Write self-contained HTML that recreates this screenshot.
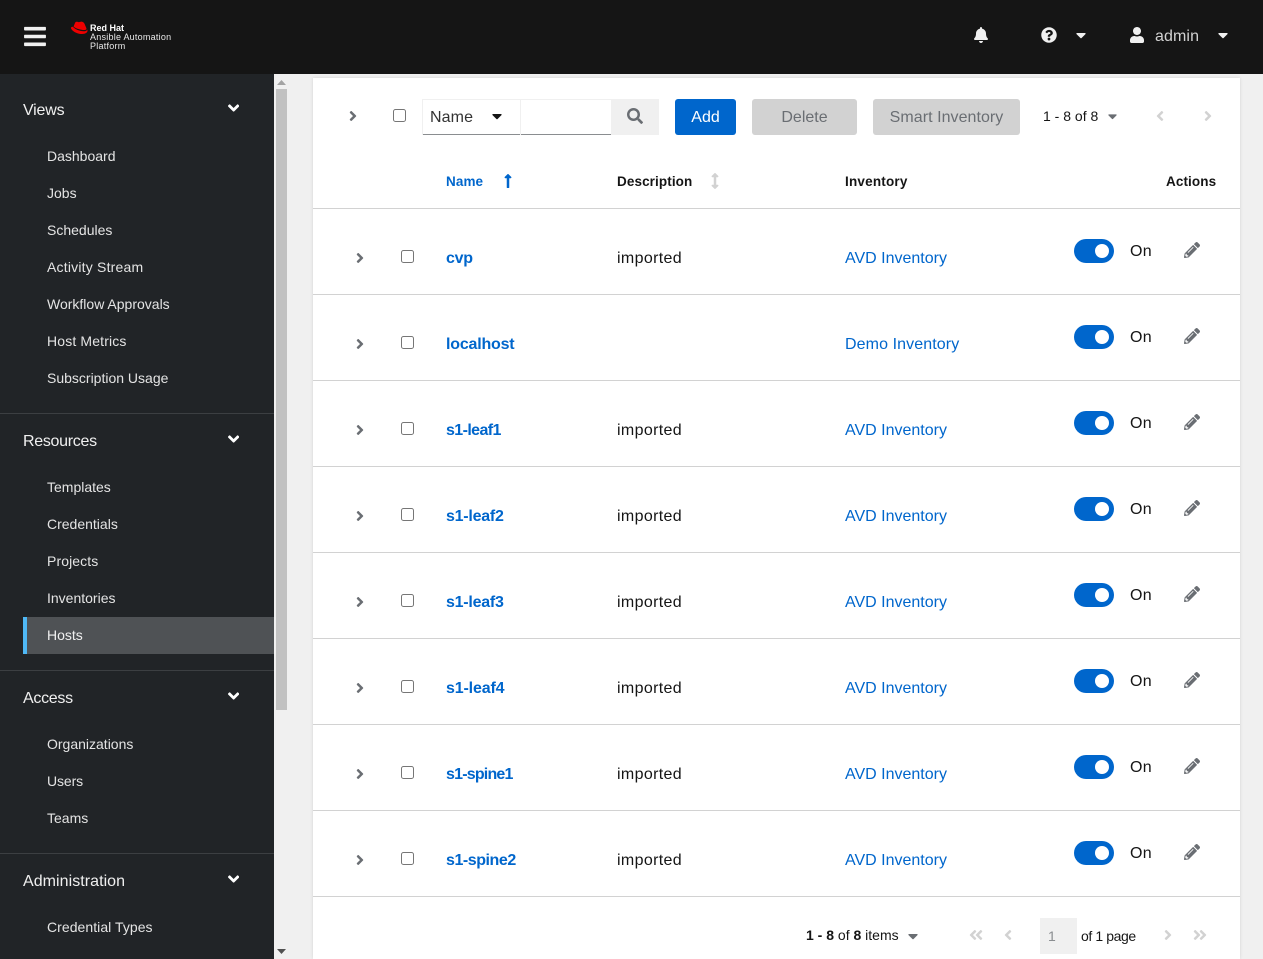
<!DOCTYPE html>
<html lang="en"><head><meta charset="utf-8"><title>Hosts</title>
<style>
html,body{margin:0;padding:0;width:1263px;height:959px;overflow:hidden;background:#f0f0f0;font-family:"Liberation Sans",sans-serif;color:#151515}
.a,.t,svg.i{position:absolute}
.t{line-height:20px;white-space:nowrap}
svg.i{display:block;fill:currentColor}
#hd{position:absolute;left:0;top:0;width:1263px;height:74px;background:#151515}
#sb{position:absolute;left:0;top:74px;width:274px;height:885px;background:#212427}
#card{position:absolute;left:313px;top:78px;width:927px;height:881px;background:#fff;box-shadow:0 0 3px rgba(0,0,0,.12)}
.g{font-size:16px;color:#f0f0f0;left:23px}
.n{font-size:14px;color:#e4e4e4;left:47px}
.d{position:absolute;left:0;width:274px;height:1px;background:#3c3f42}
.w{color:#fff}
.r{position:absolute;left:313px;width:927px;height:85px;border-bottom:1px solid #d2d2d2}
.r .t{font-size:16px;top:40px}
.nm{left:133px;color:#06c;font-weight:bold}
.de{left:304px;color:#151515;letter-spacing:.35px}
.in{left:532px;color:#06c}
.r .on{left:817px;top:33px;font-size:16px;color:#151515;letter-spacing:.3px}
.tg{position:absolute;left:761px;top:30px;width:40px;height:24px;border-radius:12px;background:#06c}
.tg:after{content:"";position:absolute;left:21px;top:5px;width:14px;height:14px;border-radius:50%;background:#fff}
.cb{position:absolute;box-sizing:border-box;width:13px;height:13px;border:1px solid #767676;border-radius:2.5px;background:#fff}
.btn{position:absolute;top:99px;height:36px;border-radius:3px;font-size:16px;line-height:37px;text-align:center;background:#d2d2d2;color:#6a6e73}
.th{font-size:13.5px;font-weight:bold;top:172px;color:#151515;letter-spacing:.1px}
</style></head><body>
<svg width="0" height="0" style="position:absolute">
<symbol id="ar" viewBox="0 0 256 512"><path d="M224.3 273l-136 136c-9.4 9.4-24.6 9.4-33.9 0l-22.6-22.6c-9.4-9.4-9.4-24.6 0-33.9l96.4-96.4-96.4-96.4c-9.4-9.4-9.4-24.6 0-33.9L54.3 103c9.4-9.4 24.6-9.4 33.9 0l136 136c9.5 9.4 9.5 24.6.1 34z"/></symbol>
<symbol id="al" viewBox="0 0 256 512"><path d="M31.7 239l136-136c9.4-9.4 24.6-9.4 33.9 0l22.6 22.6c9.4 9.4 9.4 24.6 0 33.9L127.9 256l96.4 96.4c9.4 9.4 9.4 24.6 0 33.9L201.7 409c-9.4 9.4-24.6 9.4-33.9 0l-136-136c-9.5-9.4-9.5-24.6-.1-34z"/></symbol>
<symbol id="ad" viewBox="0 0 320 512"><path d="M143 352.3L7 216.3c-9.4-9.4-9.4-24.6 0-33.9l22.6-22.6c9.4-9.4 24.6-9.4 33.9 0l96.4 96.4 96.4-96.4c9.4-9.4 24.6-9.4 33.9 0l22.6 22.6c9.4 9.4 9.4 24.6 0 33.9l-136 136c-9.2 9.4-24.4 9.4-33.8 0z"/></symbol>
<symbol id="ca" viewBox="0 0 320 512"><path d="M31.3 192h257.3c17.8 0 26.7 21.5 14.1 34.1L174.1 354.8c-7.8 7.8-20.5 7.8-28.3 0L17.2 226.1C4.6 213.5 13.5 192 31.3 192z"/></symbol>
<symbol id="pe" viewBox="0 0 512 512"><path d="M497.9 142.1l-46.1 46.1c-4.7 4.7-12.3 4.7-17 0l-111-111c-4.7-4.7-4.7-12.3 0-17l46.1-46.1c18.7-18.7 49.1-18.7 67.9 0l60.1 60.1c18.8 18.7 18.8 49.1 0 67.9zM284.2 99.8L21.6 362.4.4 483.9c-2.9 16.4 11.4 30.6 27.8 27.8l121.5-21.3 262.6-262.6c4.7-4.7 4.7-12.3 0-17l-111-111c-4.8-4.7-12.4-4.7-17.1 0zM124.1 339.9c-5.5-5.5-5.5-14.3 0-19.8l154-154c5.5-5.5 14.3-5.5 19.8 0s5.5 14.3 0 19.8l-154 154c-5.5 5.5-14.3 5.5-19.8 0zM88 424h48v36.3l-64.5 11.3-31.1-31.1L51.7 376H88v48z"/></symbol>
<symbol id="dl" viewBox="0 0 448 512"><path d="M223.7 239l136-136c9.4-9.4 24.6-9.4 33.9 0l22.6 22.6c9.4 9.4 9.4 24.6 0 33.9L319.9 256l96.4 96.4c9.4 9.4 9.4 24.6 0 33.9L393.7 409c-9.4 9.4-24.6 9.4-33.9 0l-136-136c-9.5-9.4-9.5-24.6-.1-34zm-192 34l136 136c9.4 9.4 24.6 9.4 33.9 0l22.6-22.6c9.4-9.4 9.4-24.6 0-33.9L127.9 256l96.4-96.4c9.4-9.4 9.4-24.6 0-33.9L201.7 103c-9.4-9.4-24.6-9.4-33.9 0l-136 136c-9.5 9.4-9.5 24.6-.1 34z"/></symbol>
<symbol id="dr" viewBox="0 0 448 512"><path d="M224.3 273l-136 136c-9.4 9.4-24.6 9.4-33.9 0l-22.6-22.6c-9.4-9.4-9.4-24.6 0-33.9l96.4-96.4-96.4-96.4c-9.4-9.4-9.4-24.6 0-33.9L54.3 103c9.4-9.4 24.6-9.4 33.9 0l136 136c9.5 9.4 9.5 24.6.1 34zm192-34l-136-136c-9.4-9.4-24.6-9.4-33.9 0l-22.6 22.6c-9.4 9.4-9.4 24.6 0 33.9l96.4 96.4-96.4 96.4c-9.4 9.4-9.4 24.6 0 33.9l22.6 22.6c9.4 9.4 24.6 9.4 33.9 0l136-136c9.4-9.2 9.4-24.4 0-33.8z"/></symbol>
</svg>

<div id="hd">
<svg class="i" style="left:24px;top:23.5px;color:#f0f0f0" width="22" height="25" viewBox="0 0 448 512"><path d="M16 132h416c8.837 0 16-7.163 16-16V76c0-8.837-7.163-16-16-16H16C7.163 60 0 67.163 0 76v40c0 8.837 7.163 16 16 16zm0 160h416c8.837 0 16-7.163 16-16v-40c0-8.837-7.163-16-16-16H16c-8.837 0-16 7.163-16 16v40c0 8.837 7.163 16 16 16zm0 160h416c8.837 0 16-7.163 16-16v-40c0-8.837-7.163-16-16-16H16c-8.837 0-16 7.163-16 16v40c0 8.837 7.163 16 16 16z"/></svg>
<svg class="i" style="left:71px;top:20.5px" width="17" height="14" viewBox="0 0 17 14"><path fill="#e00" d="M5.500 .8C6.500 .5 7 1.200 8 1.100 9 1 9.500 .5 10.500 .6 12 .8 13 1.500 13.600 3L15.300 7C15.800 8.600 15 9 13 9 10 9 5.500 7.800 3 6 2.500 5.600 2.700 5 3 4.400L4 2C4.300 1.300 4.800 1 5.500 .8Z"/><path fill="#e00" d="M2 5.800C.8 5.800 0 6.200 0 7 0 9 5 13 11 13 14.500 13 16.500 11.500 16.500 9.800 16.500 9.200 16.200 8.700 16 8.300 16.200 9.500 15 10.300 12.800 10.300 8.500 10.300 3.500 8 2 5.800Z"/></svg>
<div class="t" style="left:90px;top:18px;font-size:9px;font-weight:bold;color:#fff">Red Hat</div>
<div class="t" style="left:90px;top:27px;font-size:9px;color:#e8e8e8;letter-spacing:.24px">Ansible Automation</div>
<div class="t" style="left:90px;top:36px;font-size:9px;color:#e8e8e8;letter-spacing:.24px">Platform</div>
<svg class="i" style="left:974px;top:27px;color:#f0f0f0" width="14" height="16" viewBox="0 0 448 512"><path d="M224 512c35.32 0 63.97-28.65 63.97-64H160.03c0 35.35 28.65 64 63.97 64zm215.39-149.71c-19.32-20.76-55.47-51.99-55.47-154.29 0-77.7-54.48-139.9-127.94-155.16V32c0-17.67-14.32-32-31.98-32s-31.98 14.33-31.98 32v20.84C118.56 68.1 64.08 130.3 64.08 208c0 102.3-36.15 133.53-55.47 154.29-6 6.45-8.66 14.16-8.61 21.71.11 16.4 12.98 32 32.1 32h383.8c19.12 0 32-15.6 32.1-32 .05-7.55-2.61-15.27-8.61-21.71z"/></svg>
<svg class="i" style="left:1041px;top:27px;color:#f0f0f0" width="16" height="16" viewBox="0 0 512 512"><path d="M504 256c0 136.997-111.043 248-248 248S8 392.997 8 256C8 119.083 119.043 8 256 8s248 111.083 248 248zM262.655 90c-54.497 0-89.255 22.957-116.549 63.758-3.536 5.286-2.353 12.415 2.715 16.258l34.699 26.31c5.205 3.947 12.621 3.008 16.665-2.122 17.864-22.658 30.113-35.797 57.303-35.797 20.429 0 45.698 13.148 45.698 32.958 0 14.976-12.363 22.667-32.534 33.976C247.128 238.528 216 254.941 216 296v4c0 6.627 5.373 12 12 12h56c6.627 0 12-5.373 12-12v-1.333c0-28.462 83.186-29.647 83.186-106.667 0-58.002-60.165-102-116.531-102zM256 338c-25.365 0-46 20.635-46 46 0 25.364 20.635 46 46 46s46-20.636 46-46c0-25.365-20.635-46-46-46z"/></svg>
<svg class="i" style="left:1076px;top:27px;color:#f0f0f0" width="10" height="16"><use href="#ca"/></svg>
<svg class="i" style="left:1130px;top:27px;color:#f0f0f0" width="14" height="16" viewBox="0 0 448 512"><path d="M224 256c70.7 0 128-57.3 128-128S294.7 0 224 0 96 57.3 96 128s57.3 128 128 128zm89.6 32h-16.7c-22.2 10.2-46.9 16-72.9 16s-50.6-5.8-72.9-16h-16.7C60.2 288 0 348.2 0 422.4V464c0 26.5 21.5 48 48 48h352c26.5 0 48-21.5 48-48v-41.6c0-74.2-60.2-134.4-134.4-134.4z"/></svg>
<div class="t" style="left:1155px;top:27px;font-size:16px;color:#d2d2d2;letter-spacing:.1px">admin</div>
<svg class="i" style="left:1218px;top:27px;color:#f0f0f0" width="10" height="16"><use href="#ca"/></svg>
</div>

<div id="sb"></div>
<div class="t g" style="top:101px;letter-spacing:-.2px">Views</div>
<svg class="i w" style="left:228px;top:99px" width="11.25" height="18"><use href="#ad"/></svg>
<div class="t n" style="top:146px">Dashboard</div>
<div class="t n" style="top:183px">Jobs</div>
<div class="t n" style="top:220px">Schedules</div>
<div class="t n" style="top:257px;letter-spacing:.2px">Activity Stream</div>
<div class="t n" style="top:294px">Workflow Approvals</div>
<div class="t n" style="top:331px;letter-spacing:.15px">Host Metrics</div>
<div class="t n" style="top:368px">Subscription Usage</div>
<div class="d" style="top:413px"></div>
<div class="t g" style="top:432px;letter-spacing:-.3px">Resources</div>
<svg class="i w" style="left:228px;top:430px" width="11.25" height="18"><use href="#ad"/></svg>
<div class="t n" style="top:477px">Templates</div>
<div class="t n" style="top:514px">Credentials</div>
<div class="t n" style="top:551px;letter-spacing:.1px">Projects</div>
<div class="t n" style="top:588px">Inventories</div>
<div class="a" style="left:23px;top:617px;width:247px;height:37px;background:#4f5255;border-left:4px solid #4fb8f5"></div>
<div class="t n" style="top:625px;color:#f0f0f0">Hosts</div>
<div class="d" style="top:670px"></div>
<div class="t g" style="top:689px;letter-spacing:-.3px">Access</div>
<svg class="i w" style="left:228px;top:687px" width="11.25" height="18"><use href="#ad"/></svg>
<div class="t n" style="top:734px">Organizations</div>
<div class="t n" style="top:771px;letter-spacing:-.1px">Users</div>
<div class="t n" style="top:808px">Teams</div>
<div class="d" style="top:853px"></div>
<div class="t g" style="top:872px;letter-spacing:.05px">Administration</div>
<svg class="i w" style="left:228px;top:870px" width="11.25" height="18"><use href="#ad"/></svg>
<div class="t n" style="top:917px;letter-spacing:.05px">Credential Types</div>

<div class="a" style="left:276px;top:89px;width:11px;height:621px;background:#c1c1c1"></div>
<svg class="i" style="left:277px;top:80px" width="9" height="5"><path fill="#a3a3a3" d="M4.500 0L9 5H0z"/></svg>
<svg class="i" style="left:277px;top:949px" width="9" height="5"><path fill="#505050" d="M0 0H9L4.500 5z"/></svg>

<div id="card"></div>
<svg class="i" style="left:349px;top:108px;color:#6a6e73" width="8" height="16"><use href="#ar"/></svg>
<div class="cb" style="left:393px;top:109px"></div>
<div class="a" style="left:422px;top:99px;width:189px;height:34px;background:#fff;border-top:1px solid #f0f0f0;border-bottom:1px solid #8a8d90"></div>
<div class="a" style="left:422px;top:99px;width:1px;height:36px;background:#f0f0f0"></div>
<div class="a" style="left:520px;top:99px;width:1px;height:36px;background:#f0f0f0"></div>
<div class="t" style="left:430px;top:108px;font-size:16px;color:#333;letter-spacing:.1px">Name</div>
<svg class="i" style="left:492px;top:108px;color:#151515" width="10" height="16"><use href="#ca"/></svg>
<div class="a" style="left:611px;top:99px;width:48px;height:36px;background:#f0f0f0"></div>
<svg class="i" style="left:627px;top:108px;color:#6a6e73" width="16" height="16" viewBox="0 0 512 512"><path d="M505 442.7L405.3 343c-4.5-4.5-10.6-7-17-7H372c27.6-35.3 44-79.7 44-128C416 93.1 322.9 0 208 0S0 93.1 0 208s93.1 208 208 208c48.3 0 92.7-16.4 128-44v16.3c0 6.4 2.5 12.5 7 17l99.7 99.7c9.4 9.4 24.6 9.4 33.9 0l28.3-28.3c9.4-9.4 9.4-24.6.1-34zM208 336c-70.7 0-128-57.2-128-128 0-70.7 57.2-128 128-128 70.7 0 128 57.2 128 128 0 70.7-57.2 128-128 128z"/></svg>
<div class="btn" style="left:675px;width:61px;background:#06c;color:#fff">Add</div>
<div class="btn" style="left:752px;width:105px">Delete</div>
<div class="btn" style="left:873px;width:147px;letter-spacing:.05px">Smart Inventory</div>
<div class="t" style="left:1043px;top:106px;font-size:14px;color:#151515">1 - 8 of 8</div>
<svg class="i" style="left:1108px;top:109px;color:#6a6e73" width="9" height="14.4"><use href="#ca"/></svg>
<svg class="i" style="left:1156px;top:108px;color:#d2d2d2" width="8" height="16"><use href="#al"/></svg>
<svg class="i" style="left:1204px;top:108px;color:#d2d2d2" width="8" height="16"><use href="#ar"/></svg>

<div class="t th" style="left:446px;color:#06c">Name</div>
<svg class="i" style="left:504px;top:173px;color:#06c" width="8" height="16" viewBox="0 0 256 512"><path d="M88 166.059V468c0 6.627 5.373 12 12 12h56c6.627 0 12-5.373 12-12V166.059h46.059c21.382 0 32.09-25.851 16.971-40.971l-86.059-86.059c-9.373-9.373-24.569-9.373-33.941 0l-86.059 86.059c-15.119 15.119-4.411 40.971 16.971 40.971H88z"/></svg>
<div class="t th" style="left:617px">Description</div>
<svg class="i" style="left:711px;top:173px;color:#d2d2d2" width="8" height="16" viewBox="0 0 256 512"><path d="M214.059 377.941H168V134.059h46.059c21.382 0 32.09-25.851 16.971-40.971L144.971 7.029c-9.373-9.373-24.569-9.373-33.941 0L24.971 93.088c-15.119 15.119-4.411 40.971 16.971 40.971H88v243.882H41.941c-21.382 0-32.09 25.851-16.971 40.971l86.059 86.059c9.373 9.373 24.569 9.373 33.941 0l86.059-86.059c15.119-15.119 4.411-40.971-16.971-40.971z"/></svg>
<div class="t th" style="left:845px;letter-spacing:.2px">Inventory</div>
<div class="t th" style="left:1166px">Actions</div>
<div class="a" style="left:313px;top:208px;width:927px;height:1px;background:#d2d2d2"></div>

<div class="r" style="top:209px"><svg class="i" style="left:43px;top:41px;color:#6a6e73" width="8" height="16"><use href="#ar"/></svg><div class="cb" style="left:88px;top:41px"></div><div class="t nm" style="letter-spacing:-.3px">cvp</div><div class="t de">imported</div><div class="t in">AVD Inventory</div><div class="tg"></div><div class="t on">On</div><svg class="i" style="left:871px;top:33px;color:#6a6e73" width="16" height="16"><use href="#pe"/></svg></div>
<div class="r" style="top:295px"><svg class="i" style="left:43px;top:41px;color:#6a6e73" width="8" height="16"><use href="#ar"/></svg><div class="cb" style="left:88px;top:41px"></div><div class="t nm" style="letter-spacing:-.2px">localhost</div><div class="t in" style="letter-spacing:.1px">Demo Inventory</div><div class="tg"></div><div class="t on">On</div><svg class="i" style="left:871px;top:33px;color:#6a6e73" width="16" height="16"><use href="#pe"/></svg></div>
<div class="r" style="top:381px"><svg class="i" style="left:43px;top:41px;color:#6a6e73" width="8" height="16"><use href="#ar"/></svg><div class="cb" style="left:88px;top:41px"></div><div class="t nm" style="letter-spacing:-.6px">s1-leaf1</div><div class="t de">imported</div><div class="t in">AVD Inventory</div><div class="tg"></div><div class="t on">On</div><svg class="i" style="left:871px;top:33px;color:#6a6e73" width="16" height="16"><use href="#pe"/></svg></div>
<div class="r" style="top:467px"><svg class="i" style="left:43px;top:41px;color:#6a6e73" width="8" height="16"><use href="#ar"/></svg><div class="cb" style="left:88px;top:41px"></div><div class="t nm" style="letter-spacing:-.25px">s1-leaf2</div><div class="t de">imported</div><div class="t in">AVD Inventory</div><div class="tg"></div><div class="t on">On</div><svg class="i" style="left:871px;top:33px;color:#6a6e73" width="16" height="16"><use href="#pe"/></svg></div>
<div class="r" style="top:553px"><svg class="i" style="left:43px;top:41px;color:#6a6e73" width="8" height="16"><use href="#ar"/></svg><div class="cb" style="left:88px;top:41px"></div><div class="t nm" style="letter-spacing:-.25px">s1-leaf3</div><div class="t de">imported</div><div class="t in">AVD Inventory</div><div class="tg"></div><div class="t on">On</div><svg class="i" style="left:871px;top:33px;color:#6a6e73" width="16" height="16"><use href="#pe"/></svg></div>
<div class="r" style="top:639px"><svg class="i" style="left:43px;top:41px;color:#6a6e73" width="8" height="16"><use href="#ar"/></svg><div class="cb" style="left:88px;top:41px"></div><div class="t nm" style="letter-spacing:-.15px">s1-leaf4</div><div class="t de">imported</div><div class="t in">AVD Inventory</div><div class="tg"></div><div class="t on">On</div><svg class="i" style="left:871px;top:33px;color:#6a6e73" width="16" height="16"><use href="#pe"/></svg></div>
<div class="r" style="top:725px"><svg class="i" style="left:43px;top:41px;color:#6a6e73" width="8" height="16"><use href="#ar"/></svg><div class="cb" style="left:88px;top:41px"></div><div class="t nm" style="letter-spacing:-.8px">s1-spine1</div><div class="t de">imported</div><div class="t in">AVD Inventory</div><div class="tg"></div><div class="t on">On</div><svg class="i" style="left:871px;top:33px;color:#6a6e73" width="16" height="16"><use href="#pe"/></svg></div>
<div class="r" style="top:811px"><svg class="i" style="left:43px;top:41px;color:#6a6e73" width="8" height="16"><use href="#ar"/></svg><div class="cb" style="left:88px;top:41px"></div><div class="t nm" style="letter-spacing:-.45px">s1-spine2</div><div class="t de">imported</div><div class="t in">AVD Inventory</div><div class="tg"></div><div class="t on">On</div><svg class="i" style="left:871px;top:33px;color:#6a6e73" width="16" height="16"><use href="#pe"/></svg></div>

<div class="t" style="left:806px;top:925px;font-size:14px;color:#151515"><b>1 - 8</b> of <b>8</b> items</div>
<svg class="i" style="left:908px;top:928px;color:#6a6e73" width="10" height="16"><use href="#ca"/></svg>
<svg class="i" style="left:969px;top:927px;color:#d2d2d2" width="14" height="16"><use href="#dl"/></svg>
<svg class="i" style="left:1004px;top:927px;color:#d2d2d2" width="8" height="16"><use href="#al"/></svg>
<div class="a" style="left:1040px;top:918px;width:37px;height:36px;background:#f0f0f0"></div>
<div class="t" style="left:1048px;top:926px;font-size:14px;color:#8a8d90">1</div>
<div class="t" style="left:1081px;top:926px;font-size:14px;color:#151515;letter-spacing:-.4px">of 1 page</div>
<svg class="i" style="left:1164px;top:927px;color:#d2d2d2" width="8" height="16"><use href="#ar"/></svg>
<svg class="i" style="left:1193px;top:927px;color:#d2d2d2" width="14" height="16"><use href="#dr"/></svg>
</body></html>
